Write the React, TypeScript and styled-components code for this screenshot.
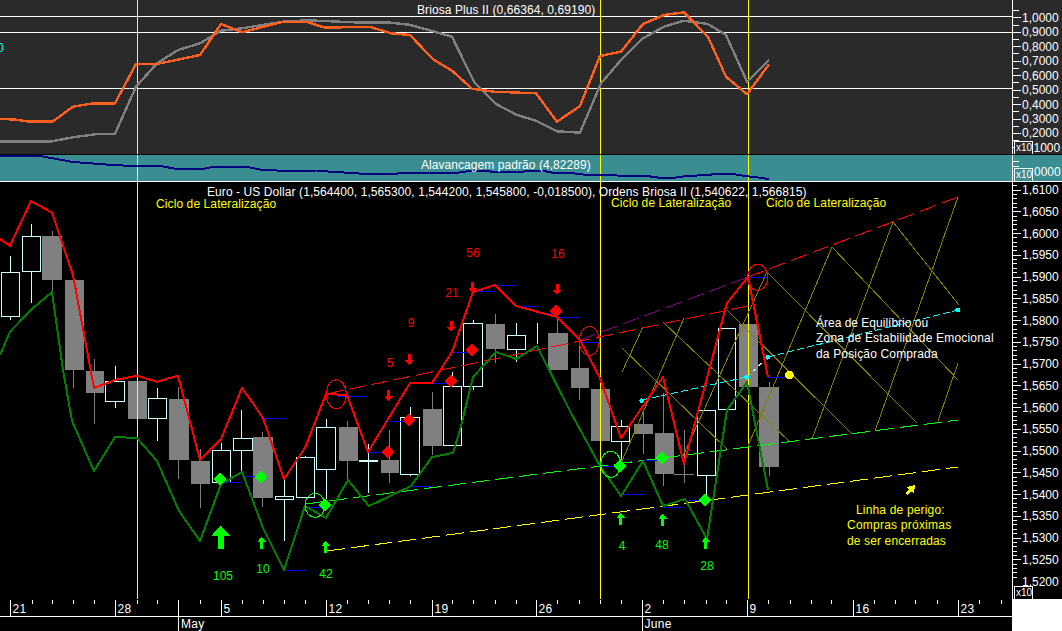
import React from "react";
import styled, { createGlobalStyle } from "styled-components";

const Global = createGlobalStyle`
  html, body { margin: 0; padding: 0; background: #ffffff; overflow: hidden; }
  #root { width: 1062px; height: 631px; }
`;

const FONT = `"Liberation Sans", Arial, sans-serif`;

const Screen = styled.div`
  display: flex;
  flex-direction: column;
  width: 1062px;
  height: 631px;
  background: #ffffff;
  font-family: ${FONT};
`;
const Row = styled.section<{ $h: number; $bg: string; $edge?: string }>`
  display: flex;
  flex: none;
  height: ${(p) => p.$h}px;
  background: ${(p) => p.$bg};
  border-bottom: ${(p) => (p.$edge ? `1px solid ${p.$edge}` : "none")};
`;
const Plot = styled.svg`
  display: block;
  flex: none;
  width: 1012px;
  height: 100%;
  shape-rendering: crispEdges;
`;
const Scale = styled.svg`
  display: block;
  flex: none;
  width: 50px;
  height: 100%;
  shape-rendering: crispEdges;
`;
const Corner = styled.div`
  flex: 1;
  background: #ffffff;
`;
const Caption = styled.text<{ $c?: string; $mid?: boolean; $sp?: number }>`
  font: 12px ${FONT};
  fill: ${(p) => p.$c ?? "#ffffff"};
  text-anchor: ${(p) => (p.$mid ? "middle" : "start")};
  letter-spacing: ${(p) => p.$sp ?? 0}px;
`;
const TagText = styled.text`
  font: 10px ${FONT};
  fill: #ffffff;
`;
const Trace = styled.polyline<{ $c: string; $w?: number; $dash?: string }>`
  fill: none;
  stroke: ${(p) => p.$c};
  stroke-width: ${(p) => p.$w ?? 1};
  stroke-dasharray: ${(p) => p.$dash ?? "none"};
  stroke-linejoin: round;
`;
const Rule = styled.line<{ $c: string; $w?: number }>`
  stroke: ${(p) => p.$c};
  stroke-width: ${(p) => p.$w ?? 1};
`;
const Hollow = styled.rect`
  fill: #000000;
  stroke: #ccffff;
  stroke-width: 1;
`;
const Solid = styled.rect`
  fill: #808080;
`;
const Mark = styled.polygon<{ $c: string }>`
  fill: ${(p) => p.$c};
`;
const Ring = styled.ellipse<{ $c: string }>`
  fill: none;
  stroke: ${(p) => p.$c};
  stroke-width: 1;
`;
const Dot = styled.circle<{ $c: string }>`
  fill: ${(p) => p.$c};
`;
const TagBox = styled.rect<{ $bg: string }>`
  fill: ${(p) => p.$bg};
  stroke: #ffffff;
  stroke-width: 1;
`;

const pts = (a: number[][]) => a.map((p) => p.join(",")).join(" ");

const orange = [[0,119],[15,119.5],[27,121.3],[53,121.3],[73,106.7],[93,103.3],[115,103.3],[136,64],[157,64],[200,55],[221,24],[242,32.3],[283,21.7],[307,22],[325,27.7],[354,27],[369,26.7],[391,33.3],[410,35],[433,59.3],[452,70.7],[472,88.7],[494,91.7],[536,93.3],[557,121.7],[580,106],[600,56],[621,51.7],[643,24],[664,15],[684,12.3],[708,37],[726,76.7],[747,94.3],[769,64.3]];
const grey = [[0,141.3],[52,141.3],[73,137.3],[95,134.3],[115,133.7],[136,86.7],[157,63.3],[178,50],[200,43.3],[221,30.7],[242,28.3],[283,21.7],[307,20.3],[354,22.3],[387,22.3],[409,24.7],[431,30.7],[452,36.7],[474,81.7],[496,104],[517,115],[536,120.7],[557,131.3],[580,132.7],[601,83.3],[621,60],[643,38.3],[664,26.7],[684,20.7],[708,24],[726,35],[747,81.7],[769,60]];
const leverage = [[0,156],[40,156],[73,162],[113,165],[133,166],[160,166],[177,169],[202,169],[213,167],[247,167],[263,170],[290,171],[317,170.5],[333,172],[354,173],[364,174],[396,174],[399,173],[456,173],[469,171],[489,171],[492,172],[522,172],[526,171],[544,171],[554,173],[571,173],[587,175],[647,176],[661,178],[672,178],[687,176],[708,175],[715,174],[733,174],[745,176],[758,177.5],[769,179]];
const redBand = [[0,239],[10,245.7],[31,201],[52,212.7],[73,275],[94,388],[115,380],[137,375.7],[157,381.7],[178,375.7],[200,460],[221,439],[242,388],[250,399],[263,418],[284,479],[305,448],[326,394],[347,395],[368,452],[410,383],[432,383],[452,352],[473,292],[495,285],[516,306],[557,317],[580,340],[600,378],[621,438],[663,377],[684,464],[727,303],[748,277],[768,377]];
const greenBand = [[0,355],[10,331.7],[33,308],[52,292],[63,370],[72,421],[94,471],[115,437],[137,438],[157,461],[179,511],[200,541],[221,484],[242,472],[250,493],[263,528],[284,570],[305,506],[326,518],[348,480],[369,506],[411,486],[432,457],[453,453],[460,430],[473,377],[496,352],[516,359],[537,346],[570,411],[600,466],[621,496],[643,461],[663,506],[685,499],[707,539],[727,410],[747,382],[768,490]];

type Bar = { x: number; l: number; r: number; t: number; b: number; hi: number; lo: number; up: boolean };
const bars: Bar[] = [
  { x: 10, l: 1, r: 19, t: 272, b: 316, hi: 256, lo: 320, up: true },
  { x: 31, l: 22, r: 40, t: 236, b: 271, hi: 224, lo: 303, up: true },
  { x: 52, l: 42, r: 62, t: 236, b: 280, hi: 231, lo: 292, up: false },
  { x: 73, l: 65, r: 84, t: 280, b: 370, hi: 280, lo: 388, up: false },
  { x: 94, l: 86, r: 104, t: 371, b: 393, hi: 359, lo: 424, up: false },
  { x: 115, l: 105, r: 124, t: 381, b: 401, hi: 366, lo: 408, up: true },
  { x: 137, l: 128, r: 147, t: 381, b: 419, hi: 381, lo: 419, up: false },
  { x: 157, l: 148, r: 166, t: 398, b: 418, hi: 388, lo: 441, up: true },
  { x: 178, l: 169, r: 189, t: 399, b: 460, hi: 387, lo: 479, up: false },
  { x: 200, l: 191, r: 210, t: 461, b: 484, hi: 449, lo: 508, up: false },
  { x: 221, l: 212, r: 230, t: 450, b: 482, hi: 443, lo: 483, up: true },
  { x: 241, l: 233, r: 252, t: 438, b: 450, hi: 410, lo: 471, up: true },
  { x: 262, l: 253, r: 273, t: 437, b: 498, hi: 432, lo: 507, up: false },
  { x: 284, l: 275, r: 293, t: 496, b: 499, hi: 476, lo: 541, up: true },
  { x: 305, l: 296, r: 314, t: 457, b: 497, hi: 456, lo: 497, up: true },
  { x: 326, l: 316, r: 335, t: 427, b: 469, hi: 419, lo: 499, up: true },
  { x: 347, l: 339, r: 358, t: 427, b: 461, hi: 421, lo: 479, up: false },
  { x: 368, l: 359, r: 377, t: 460, b: 461, hi: 444, lo: 493, up: true },
  { x: 389, l: 381, r: 399, t: 460, b: 473, hi: 430, lo: 483, up: false },
  { x: 410, l: 400, r: 419, t: 417, b: 474, hi: 407, lo: 476, up: true },
  { x: 432, l: 423, r: 442, t: 409, b: 446, hi: 392, lo: 455, up: false },
  { x: 452, l: 443, r: 461, t: 386, b: 445, hi: 372, lo: 445, up: true },
  { x: 473, l: 463, r: 482, t: 323, b: 386, hi: 320, lo: 390, up: true },
  { x: 495, l: 486, r: 505, t: 324, b: 349, hi: 314, lo: 363, up: false },
  { x: 516, l: 507, r: 525, t: 335, b: 349, hi: 323, lo: 362, up: true },
  { x: 537, l: 528, r: 546, t: 333, b: 333, hi: 323, lo: 344, up: true },
  { x: 557, l: 548, r: 568, t: 333, b: 370, hi: 318, lo: 370, up: false },
  { x: 579, l: 571, r: 589, t: 368, b: 388, hi: 339, lo: 400, up: false },
  { x: 600, l: 591, r: 610, t: 389, b: 441, hi: 389, lo: 441, up: false },
  { x: 621, l: 611, r: 629, t: 426, b: 441, hi: 420, lo: 460, up: true },
  { x: 643, l: 634, r: 653, t: 424, b: 434, hi: 413, lo: 454, up: false },
  { x: 663, l: 655, r: 674, t: 433, b: 474, hi: 393, lo: 486, up: false },
  { x: 684, l: 674, r: 694, t: 474, b: 475, hi: 430, lo: 483, up: false },
  { x: 706, l: 697, r: 715, t: 410, b: 475, hi: 410, lo: 497, up: true },
  { x: 727, l: 718, r: 735, t: 328, b: 409, hi: 328, lo: 409, up: true },
  { x: 748, l: 739, r: 758, t: 324, b: 387, hi: 324, lo: 387, up: false },
  { x: 769, l: 759, r: 779, t: 387, b: 467, hi: 382, lo: 476, up: false },
];

const stops = [[222,242,482],[243,263,476],[263,285,418],[326,347,394],[337,368,396],[285,305,570],[307,325,507],[368,388,452],[390,407,421],[410,432,486],[432,450,383],[452,468,352],[473,495,291],[495,516,285],[517,537,306],[537,557,313],[557,579,317],[580,600,342],[600,620,466],[622,643,494],[643,657,460],[663,684,507],[685,700,500],[748,767,277],[768,787,377]];

const olive = [
  [958,197,875,431],[893,222,812,439],[832,247,748,446],
  [893,222,959,305],[832,247,958,380],[767,272,917,423],[727,310,852,434],
  [663,322,790,442],[622,348,727,449],[622,372,643,327],[622,461,684,318],
  [682,458,767,272],[958,363,938,421],
];

const diamonds: [number, number, string][] = [
  [409,420,"#ff0000"],[451,381,"#ff0000"],[472,350,"#ff0000"],[388,452,"#ff0000"],[556,311,"#ff0000"],
  [220,479,"#00ff00"],[261,477,"#00ff00"],[325,505,"#00ff00"],[620,466,"#00ff00"],[662,458,"#00ff00"],[705,500,"#00ff00"],
];
const diamond = (x: number, y: number) => `${x},${y - 6.5} ${x + 6.5},${y} ${x},${y + 6.5} ${x - 6.5},${y}`;
const arrowUp = (x: number, y: number, s = 1) =>
  pts([[x, y - 6*s],[x + 4.5*s, y - 1*s],[x + 1.5*s, y - 1*s],[x + 1.5*s, y + 5.5*s],[x - 1.5*s, y + 5.5*s],[x - 1.5*s, y - 1*s],[x - 4.5*s, y - 1*s]]);
const arrowDown = (x: number, y: number) =>
  pts([[x, y + 6],[x + 4.5, y + 1],[x + 1.5, y + 1],[x + 1.5, y - 5.5],[x - 1.5, y - 5.5],[x - 1.5, y + 1],[x - 4.5, y + 1]]);

const Verticals = ({ top, bottom }: { top: number; bottom: number }) => (
  <>
    {[137, 600, 748].map((x) => (
      <Rule key={x} $c="#ffff00" x1={x + 0.5} x2={x + 0.5} y1={top} y2={bottom} />
    ))}
  </>
);

const topLabels = ["1,0000","0,9000","0,8000","0,7000","0,6000","0,5000","0,4000","0,3000","0,2000"];
const mainLabels = Array.from({ length: 19 }, (_, i) => (1.61 - i * 0.005).toFixed(4).replace(".", ","));
const minorDays = [32,52,73,94,137,157,200,242,263,284,305,347,368,389,410,452,473,495,516,557,579,600,621,663,684,706,726,768,790,811,831,874,895,915,937,979,1001];
const majorDays: [number, string][] = [[10,"21"],[115,"28"],[221,"5"],[326,"12"],[432,"19"],[536,"26"],[642,"2"],[747,"9"],[853,"16"],[958,"23"]];

const App = () => (
  <>
    <Global />
    <Screen>
      <Row $h={154} $bg="#2a2a2a" $edge="#000000">
        <Plot viewBox="0 0 1012 154">
          <Rule $c="#ffffff" x1={0} x2={1012} y1={16.5} y2={16.5} />
          <Rule $c="#ffffff" x1={0} x2={1012} y1={32.5} y2={32.5} />
          <Rule $c="#ffffff" x1={0} x2={1012} y1={88.5} y2={88.5} />
          <Verticals top={0} bottom={154} />
          <Trace $c="#808080" $w={2.4} points={pts(grey)} />
          <Trace $c="#ff6020" $w={2.4} points={pts(orange)} />
          <Caption $c="#00ffff" x={-3} y={52}>0</Caption>
          <Caption x={417} y={14} $sp={0.09}>Briosa Plus II (0,66364, 0,69190)</Caption>
        </Plot>
        <Scale viewBox="1012 0 50 154">
          <Rule $c="#ffffff" x1={1012.5} x2={1012.5} y1={0} y2={154} />
          {[...topLabels, ""].map((t, i) => {
            const y = 17.3 + i * 14.46;
            return (
              <React.Fragment key={i}>
                <Rule $c="#ffffff" x1={1012} x2={1021} y1={Math.round(y) + 0.5} y2={Math.round(y) + 0.5} />
                <Rule $c="#ffffff" x1={1012} x2={1019} y1={Math.round(y - 7.2) + 0.5} y2={Math.round(y - 7.2) + 0.5} />
                {t && <Caption x={1022} y={y + 4.5}>{t}</Caption>}
              </React.Fragment>
            );
          })}
          <TagBox $bg="#2a2a2a" x={1014.5} y={141.5} width={18} height={15} />
          <TagText x={1016} y={151}>x10</TagText>
          <Caption x={1033.5} y={152}>1000</Caption>
        </Scale>
      </Row>
      <Row $h={26} $bg="#3a8d90" $edge="#ffffff">
        <Plot viewBox="0 155 1012 26">
          <Verticals top={155} bottom={181} />
          <Trace $c="#000080" $w={2} points={pts(leverage)} />
          <Caption x={421} y={168.5} $sp={0.06}>Alavancagem padrão (4,82289)</Caption>
        </Plot>
        <Scale viewBox="1012 155 50 26">
          <Rule $c="#ffffff" x1={1012.5} x2={1012.5} y1={155} y2={181} />
          <Rule $c="#ffffff" x1={1012} x2={1019} y1={161.5} y2={161.5} />
          <Rule $c="#ffffff" x1={1012} x2={1019} y1={166.5} y2={166.5} />
          <TagBox $bg="#3a8d90" x={1014.5} y={168.5} width={18} height={15} />
          <TagText x={1016} y={178}>x10</TagText>
          <Caption x={1034} y={176}>0000</Caption>
        </Scale>
      </Row>
      <Row $h={417} $bg="#000000">
        <Plot viewBox="0 182 1012 417">
          {bars.map((b) => (
            <React.Fragment key={b.x}>
              <Rule $c={b.up ? "#ccffff" : "#808080"} x1={b.x + 0.5} x2={b.x + 0.5} y1={b.hi} y2={b.lo} />
              {b.up ? (
                <Hollow x={b.l + 0.5} y={b.t + 0.5} width={b.r - b.l} height={Math.max(b.b - b.t, 0)} />
              ) : (
                <Solid x={b.l} y={b.t} width={b.r - b.l} height={Math.max(b.b - b.t, 1)} />
              )}
            </React.Fragment>
          ))}
          <Verticals top={182} bottom={599} />
          {olive.map((l) => (
            <Rule key={l.join()} $c="#808000" x1={l[0]} y1={l[1]} x2={l[2]} y2={l[3]} />
          ))}
          <Trace $c="#800080" $dash="17 6" points="580,340 748,277" />
          <Trace $c="#ff0000" $dash="17 6" points="326,394 748,306" />
          <Trace $c="#ff0000" $dash="17 6" points="748,277 958,197" />
          <Trace $c="#00ff00" $dash="18 6" points="305,504 958,420" />
          <Trace $c="#ffff00" $dash="18 6" points="327,551 958,467" />
          <Trace $c="#00ffff" $dash="7 3" points="642,400 747,377" />
          <Trace $c="#ccffff" $dash="4 4" points="747,377 768,357" />
          <Trace $c="#00ffff" $dash="7 3" points="768,357 958,310" />
          {stops.map((s) => (
            <Rule key={s.join()} $c="#0000ff" x1={s[0]} x2={s[1]} y1={s[2] + 0.5} y2={s[2] + 0.5} />
          ))}
          <Trace $c="#008000" $w={2} points={pts(greenBand)} />
          <Trace $c="#ff0000" $w={2} points={pts(redBand)} />
          <Ring $c="#ff0000" cx={336.3} cy={394.3} rx={10} ry={14.5} />
          <Ring $c="#ff0000" cx={589.3} cy={341} rx={10} ry={14.5} />
          <Ring $c="#ff0000" cx={757.7} cy={277.3} rx={10} ry={13} />
          <Ring $c="#00ff00" cx={315} cy={505.3} rx={10} ry={12} />
          <Ring $c="#00ff00" cx={610.7} cy={464.3} rx={10} ry={13} />
          {diamonds.map(([x, y, c]) => (
            <Mark key={`${x}-${y}`} $c={c} points={diamond(x, y)} />
          ))}
          {[[388.7,395],[409.3,359],[451,326],[472.7,287],[557,289]].map(([x, y]) => (
            <Mark key={x} $c="#ff0000" points={arrowDown(x, y)} />
          ))}
          <Mark $c="#00ff00" points={arrowUp(220.7, 537.5, 2)} />
          {[[261.7,543],[325.7,547],[620.7,519],[662.7,520],[705.7,543]].map(([x, y]) => (
            <Mark key={x} $c="#00ff00" points={arrowUp(x, y)} />
          ))}
          <Mark $c="#ffff00" points="915,485 914,494 911.5,491.5 907,495 905.5,493 909,489.5 907,487" />
          <Dot $c="#ffff00" cx={789.3} cy={375} r={4.5} />
          {[[641.7,400.7],[746.7,377],[767.7,357.3],[957.7,310]].map(([x, y]) => (
            <Dot key={x} $c="#00ffff" cx={x} cy={y} r={2.4} />
          ))}
          <Caption x={207} y={196} $sp={0.08}>Euro - US Dollar (1,564400, 1,565300, 1,544200, 1,545800, -0,018500), Ordens Briosa II (1,540622, 1,566815)</Caption>
          <Caption $c="#ffff00" x={156} y={208} $sp={0.1}>Ciclo de Lateralização</Caption>
          <Caption $c="#ffff00" x={611} y={207} $sp={0.1}>Ciclo de Lateralização</Caption>
          <Caption $c="#ffff00" x={766} y={207} $sp={0.1}>Ciclo de Lateralização</Caption>
          <Caption x={816} y={327} $sp={0}>Área de Equilíbrio ou</Caption>
          <Caption x={816} y={342} $sp={0.19}>Zona de Estabilidade Emocional</Caption>
          <Caption x={816} y={358} $sp={0.16}>da Posição Comprada</Caption>
          <Caption $c="#ffff00" x={856} y={514} $sp={0.17}>Linha de perigo:</Caption>
          <Caption $c="#ffff00" x={847} y={529} $sp={0.23}>Compras próximas</Caption>
          <Caption $c="#ffff00" x={847} y={545} $sp={0.13}>de ser encerradas</Caption>
          {([["56",473,257],["21",452,297],["9",411,327],["5",390,367],["16",558,258]] as [string, number, number][]).map(([t, x, y]) => (
            <Caption key={t} $c="#ff0000" $mid x={x} y={y}>{t}</Caption>
          ))}
          {([["105",223,580],["10",263,573],["42",326,578],["4",622,550],["48",662,549],["28",707,570]] as [string, number, number][]).map(([t, x, y]) => (
            <Caption key={t} $c="#00ff00" $mid x={x} y={y}>{t}</Caption>
          ))}
        </Plot>
        <Scale viewBox="1012 182 50 417">
          <Rule $c="#ffffff" x1={1012.5} x2={1012.5} y1={182} y2={599} />
          {Array.from({ length: 92 }, (_, i) => {
            const y = Math.round(189.5 - 2 * 4.35 + i * 4.35) + 0.5;
            return <Rule key={i} $c="#ffffff" x1={1012} x2={i % 5 === 2 ? 1021 : 1017} y1={y} y2={y} />;
          })}
          {mainLabels.map((t, i) => (
            <Caption key={t} x={1022} y={194 + i * 21.75}>{t}</Caption>
          ))}
          <TagBox $bg="#000000" x={1014.5} y={586.5} width={18} height={15} />
          <TagText x={1016} y={596}>x10</TagText>
        </Scale>
      </Row>
      <Row $h={32} $bg="#000000">
        <Plot viewBox="0 599 1012 32">
          <Rule $c="#ffffff" x1={0} x2={1012} y1={616.5} y2={616.5} />
          {minorDays.map((x) => (
            <Rule key={x} $c="#ffffff" x1={x + 0.5} x2={x + 0.5} y1={600} y2={604} />
          ))}
          {majorDays.map(([x, t]) => (
            <React.Fragment key={t}>
              <Rule $c="#ffffff" x1={x + 0.5} x2={x + 0.5} y1={600} y2={616} />
              <Caption x={x + 2.5} y={612.5} $sp={0.3}>{t}</Caption>
            </React.Fragment>
          ))}
          <Rule $c="#ffffff" x1={178.5} x2={178.5} y1={600} y2={631} />
          <Caption x={181} y={628} $sp={0.3}>May</Caption>
          <Rule $c="#ffffff" x1={642.5} x2={642.5} y1={616} y2={631} />
          <Caption x={644.5} y={628} $sp={0.3}>June</Caption>
        </Plot>
        <Corner />
      </Row>
    </Screen>
  </>
);

export default App;
